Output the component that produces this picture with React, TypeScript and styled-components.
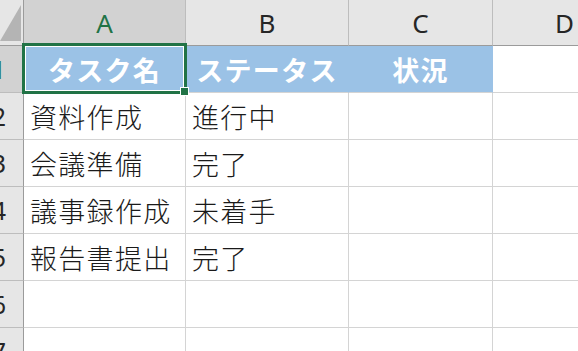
import React from "react";
import styled, { createGlobalStyle, css } from "styled-components";

const GlobalStyle = createGlobalStyle`
    html, body {
        margin: 0;
        padding: 0;
        background: #ffffff;
        overflow: hidden;
    }
`;

const GREEN = "#217346";
const FILL = "#9bc2e6";
const GRID = "#d4d4d4";

const Sheet = styled.div`
    display: grid;
    grid-template-columns: 24px 162px 163px 144px 144px;
    grid-template-rows: 46px repeat(7, 47px);
    width: 578px;
    height: 351px;
    overflow: hidden;
    font-family: "Noto Sans CJK JP", "Noto Sans", sans-serif;
`;

const Corner = styled.div`
    background: #e6e6e6;
    border-right: 1px solid #9b9b9b;
    border-bottom: 1px solid #9b9b9b;
    box-sizing: border-box;
    overflow: hidden;

    svg {
        display: block;
    }
`;

const ColHead = styled.div<{ $active?: boolean }>`
    box-sizing: border-box;
    display: flex;
    align-items: center;
    justify-content: center;
    background: ${p => (p.$active ? "#d2d2d2" : "#e6e6e6")};
    color: ${p => (p.$active ? GREEN : "#262626")};
    border-right: 1px solid #bdbdbd;
    border-bottom: 1px solid #9b9b9b;
    font-family: "Noto Sans", "Liberation Sans", sans-serif;
    font-size: 26px;
    font-weight: 400;
    padding-top: 1px;
`;

const RowHead = styled.div<{ $active?: boolean }>`
    box-sizing: border-box;
    display: flex;
    align-items: center;
    overflow: hidden;
    background: ${p => (p.$active ? "#d2d2d2" : "#e6e6e6")};
    color: ${p => (p.$active ? GREEN : "#262626")};
    border-right: 1px solid #9b9b9b;
    border-bottom: 1px solid #bdbdbd;
    font-family: "Noto Sans", "Liberation Sans", sans-serif;
    font-size: 25px;
`;

const RowNum = styled.span`
    flex: 0 0 44px;
    margin-left: -23px;
    text-align: center;
`;

const Cell = styled.div<{ $head?: boolean; $selected?: boolean }>`
    box-sizing: border-box;
    display: flex;
    align-items: center;
    padding-left: 6px;
    border-right: 1px solid ${GRID};
    border-bottom: 1px solid ${GRID};
    font-size: 27px;
    font-weight: 300;
    letter-spacing: 1.3px;
    color: #1a1a1a;
    white-space: nowrap;
    position: relative;

    ${p =>
        p.$head &&
        css`
            background: ${FILL};
            border-right-color: ${FILL};
            color: #ffffff;
            font-weight: 700;
            justify-content: center;
            padding-left: 0;
        `}

    ${p =>
        p.$selected &&
        css`
            z-index: 1;

            &::after {
                content: "";
                position: absolute;
                top: -3px;
                left: -2px;
                right: -2px;
                bottom: -2px;
                border: 3px solid ${GREEN};
                box-shadow: inset 0 0 0 1px #ffffff;
                pointer-events: none;
            }
        `}
`;

const FillHandle = styled.span`
    position: absolute;
    right: -4px;
    bottom: -4px;
    width: 7px;
    height: 7px;
    background: ${GREEN};
    border: 1px solid #ffffff;
    z-index: 2;
`;

const columns = ["A", "B", "C", "D"];

const header = ["タスク名", "ステータス", "状況"];

const rows: string[][] = [
    ["資料作成", "進行中"],
    ["会議準備", "完了"],
    ["議事録作成", "未着手"],
    ["報告書提出", "完了"],
    [],
    [],
];

export default function App() {
    return (
        <>
            <GlobalStyle />
            <Sheet>
                <Corner>
                    <svg width="23" height="45">
                        <polygon points="21,5 21,41 0,41" fill="#b4b4b4" />
                    </svg>
                </Corner>
                {columns.map(c => (
                    <ColHead key={c} $active={c === "A"}>
                        {c}
                    </ColHead>
                ))}

                <RowHead $active>
                    <RowNum>1</RowNum>
                </RowHead>
                {header.map((h, i) => (
                    <Cell key={h} $head $selected={i === 0}>
                        {h}
                        {i === 0 && <FillHandle />}
                    </Cell>
                ))}
                <Cell />

                {rows.map((r, ri) => (
                    <React.Fragment key={ri}>
                        <RowHead>
                            <RowNum>{ri + 2}</RowNum>
                        </RowHead>
                        {columns.map((c, ci) => (
                            <Cell key={c}>{r[ci] ?? ""}</Cell>
                        ))}
                    </React.Fragment>
                ))}
            </Sheet>
        </>
    );
}
